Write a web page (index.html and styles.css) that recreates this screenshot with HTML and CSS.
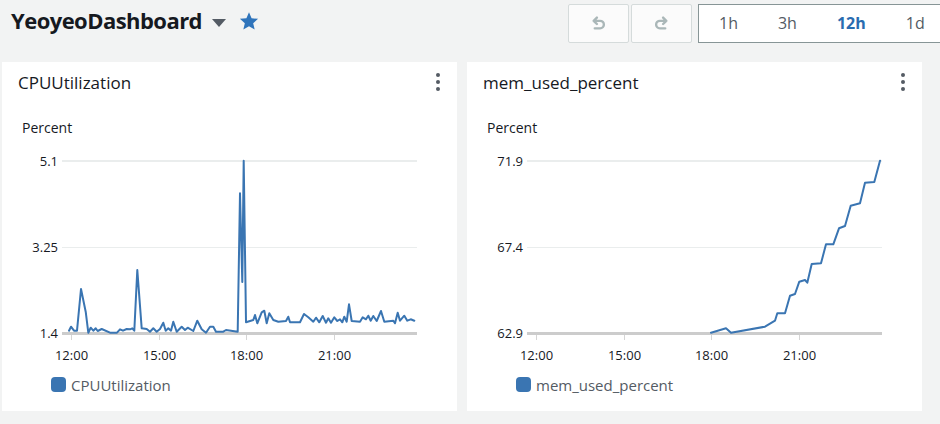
FILE: index.html
```html
<!DOCTYPE html>
<html lang="en">
<head>
<meta charset="utf-8">
<title>YeoyeoDashboard</title>
<link rel="stylesheet" href="styles.css">
</head>
<body>
<header class="topbar">
  <div class="title-area">
    <h1 class="dash-title">YeoyeoDashboard</h1>
    <span class="caret"></span>
    <svg class="star" viewBox="0 0 24 24" width="20" height="20"><path d="M12 1.5l3.1 7.2 7.8.7-5.9 5.2 1.8 7.6L12 18.2l-6.8 4 1.8-7.6-5.9-5.2 7.8-.7z"/></svg>
  </div>
  <div class="controls">
    <button class="icon-btn" aria-label="Undo"><svg viewBox="0 0 12 14" width="13" height="15"><path d="M4.5 1.5L1.5 4.5 4.5 7.5M1.5 4.5H7.5a3.5 3.5 0 0 1 0 7H2.5"/></svg></button>
    <button class="icon-btn" aria-label="Redo"><svg viewBox="0 0 12 14" width="13" height="15"><path d="M7.5 1.5L10.5 4.5 7.5 7.5M10.5 4.5H4.5a3.5 3.5 0 0 0 0 7H9.5"/></svg></button>
    <div class="range">
      <span class="range-item">1h</span>
      <span class="range-item">3h</span>
      <span class="range-item active">12h</span>
      <span class="range-item">1d</span>
    </div>
  </div>
</header>

<main class="grid">
  <section class="panel">
    <div class="panel-head">
      <h2 class="panel-title">CPUUtilization</h2>
      <span class="kebab"><i></i><i></i><i></i></span>
    </div>
    <div class="unit">Percent</div>
    <svg class="chart" viewBox="0 0 455 225" width="455" height="225">
      <line class="grid-top" x1="60" y1="16" x2="415" y2="16"/>
      <line class="grid-mid" x1="60" y1="102.5" x2="415" y2="102.5"/>
      <line class="tick" x1="69.5" y1="188" x2="69.5" y2="195"/>
      <line class="tick" x1="157.5" y1="188" x2="157.5" y2="195"/>
      <line class="tick" x1="244.5" y1="188" x2="244.5" y2="195"/>
      <line class="tick" x1="332.5" y1="188" x2="332.5" y2="195"/>
      <line class="grid-base" x1="60" y1="188.5" x2="415" y2="188.5"/>
      <text class="ylab" x="56" y="20.5">5.1</text>
      <text class="ylab" x="56" y="106.5">3.25</text>
      <text class="ylab" x="56" y="192.5">1.4</text>
      <text class="xlab" x="69.5" y="215">12:00</text>
      <text class="xlab" x="157.5" y="215">15:00</text>
      <text class="xlab" x="244.5" y="215">18:00</text>
      <text class="xlab" x="332.5" y="215">21:00</text>
      <polyline class="series" points="67,185.7 69,181.7 72,185.7 75,185.7 79,144 83.7,166.7 86.3,187.7 88.7,182.7 91.3,185.7 93.7,183.3 95.7,186 99.7,184 108,187.7 115,187.7 118,184.3 121,185.7 124.7,184 128,184.3 130.3,183.3 132.3,185.7 135.3,125 139.7,183.3 144.7,184 148,186.7 151.3,183.3 154.7,186.7 158,184 161.3,177.7 163.7,185.7 166.3,183.3 169,185.7 171.3,176.7 174.7,186.7 179.7,181.7 183,185 185.7,182.7 191.3,186 195.3,175.7 199.7,184.3 204,187.7 208,181.7 211.3,181.7 214,186.7 221.3,186.7 224,185 235.7,186.7 238,48.3 240.3,137 241.7,15.7 244,177.3 251.3,175 253,170 255.3,178.3 259.7,167.3 262.3,165.7 264.7,178.3 267.3,168.3 271.3,175 276.3,176.7 284,176 286.3,171.7 288,177.3 298,177.3 302,169 306.3,172.3 311.3,176.7 314,172.7 317.3,177.3 320.7,171 324,177.7 326.3,173.3 329,177.7 332.3,172.3 335.3,176 338,174.3 340.3,177.3 342.3,171.7 344.7,176.7 347,159.3 349.7,176 358,176.7 360.7,172.3 364,174.3 366.3,170.7 368.7,175.7 371.3,171 374.7,176 379,166 382.3,176.7 391.3,175.7 393,178.3 395.7,167.7 398,175.7 402.3,170.7 405.3,175.7 408.7,174.3 412.3,175.7"/>
    </svg>
    <div class="legend"><span class="swatch"></span><span>CPUUtilization</span></div>
  </section>

  <section class="panel">
    <div class="panel-head">
      <h2 class="panel-title">mem_used_percent</h2>
      <span class="kebab"><i></i><i></i><i></i></span>
    </div>
    <div class="unit">Percent</div>
    <svg class="chart" viewBox="0 0 455 225" width="455" height="225">
      <line class="grid-top" x1="60" y1="16" x2="415" y2="16"/>
      <line class="grid-mid" x1="60" y1="102.5" x2="415" y2="102.5"/>
      <line class="tick" x1="69.5" y1="188" x2="69.5" y2="195"/>
      <line class="tick" x1="157.5" y1="188" x2="157.5" y2="195"/>
      <line class="tick" x1="244.5" y1="188" x2="244.5" y2="195"/>
      <line class="tick" x1="332.5" y1="188" x2="332.5" y2="195"/>
      <line class="grid-base" x1="60" y1="188.5" x2="415" y2="188.5"/>
      <text class="ylab" x="56" y="20.5">71.9</text>
      <text class="ylab" x="56" y="106.5">67.4</text>
      <text class="ylab" x="56" y="192.5">62.9</text>
      <text class="xlab" x="69.5" y="215">12:00</text>
      <text class="xlab" x="157.5" y="215">15:00</text>
      <text class="xlab" x="244.5" y="215">18:00</text>
      <text class="xlab" x="332.5" y="215">21:00</text>
      <polyline class="series" points="244,187.7 259,183.3 264,187.7 298,181.7 308,175.7 310.3,168.3 318,168.3 323,150.7 328,149 332.3,136.7 338,135 340.3,137.7 344.7,119 354,118.3 359,99.3 366.3,99.3 372,83.3 378,81 383.7,60.7 393,58.3 398,37.7 407.3,37 413,15.7"/>
    </svg>
    <div class="legend"><span class="swatch"></span><span>mem_used_percent</span></div>
  </section>
</main>
</body>
</html>
```

FILE: styles.css
```css
html, body {
  margin: 0;
  padding: 0;
  overflow: hidden;
}

body {
  background: #f2f3f3;
  font-family: "Open Sans", "Noto Sans", sans-serif;
  color: #16191f;
  width: 940px;
  height: 424px;
}

.topbar {
  display: flex;
  align-items: flex-start;
  padding: 4px 0 0 11px;
  height: 39px;
}

.title-area {
  flex: 1;
  min-width: 0;
  display: flex;
  align-items: center;
  height: 30px;
  margin-top: 1px;
}

.dash-title {
  margin: 0;
  font-size: 22px;
  line-height: 30px;
  font-weight: 700;
  color: #16191f;
  letter-spacing: -0.55px;
}

.caret {
  width: 0;
  height: 0;
  margin: 5px 0 0 10px;
  border-left: 7px solid transparent;
  border-right: 7px solid transparent;
  border-top: 8px solid #545b64;
}

.star {
  margin: 2px 0 0 13px;
  fill: #2f74bb;
}

.controls {
  display: flex;
  flex-shrink: 0;
  margin-right: -40px;
}

.icon-btn {
  width: 61px;
  height: 39px;
  margin: 0 2px 0 0;
  padding: 0;
  border: 1px solid #d5dbdb;
  border-radius: 2px;
  background: #fbfbfb;
  display: flex;
  align-items: center;
  justify-content: center;
}

.icon-btn svg {
  fill: none;
  stroke: #aab7b8;
  stroke-width: 2.2;
  stroke-linecap: round;
  stroke-linejoin: round;
}

.icon-btn + .icon-btn {
  margin-right: 6px;
}

.range {
  display: flex;
  align-items: center;
  height: 37px;
  border: 1px solid #879596;
  background: #ffffff;
  width: 280px;
}

.range-item {
  padding: 0 20px;
  font-size: 16px;
  line-height: 37px;
  color: #545b64;
}

.range-item.active {
  font-weight: 700;
  color: #2a6cb0;
}

.grid {
  display: flex;
  gap: 10px;
  padding: 0 18px 0 2px;
  margin-top: 19px;
}

.panel {
  flex: 0 0 455px;
  height: 349px;
  background: #ffffff;
}

.panel-head {
  display: flex;
  justify-content: space-between;
  align-items: flex-start;
  padding: 9px 16px 0 16px;
  height: 24px;
}

.panel-title {
  margin: 0;
  font-size: 17px;
  line-height: 24px;
  font-weight: 400;
  color: #16191f;
}

.kebab {
  display: flex;
  flex-direction: column;
  gap: 3px;
  margin-top: 2px;
  margin-right: 1px;
}

.kebab i {
  display: block;
  width: 4px;
  height: 4px;
  border-radius: 50%;
  background: #545b64;
}

.unit {
  margin: 23px 0 0 20px;
  font-size: 14px;
  line-height: 20px;
  color: #16191f;
}

.chart {
  display: block;
  margin-top: 7px;
}

.chart text {
  font-family: "Open Sans", "Noto Sans", sans-serif;
  font-size: 13px;
  fill: #16191f;
}

.chart .ylab {
  text-anchor: end;
}

.chart .xlab {
  text-anchor: middle;
}

.grid-top {
  stroke: #eaeded;
  stroke-width: 2;
}

.grid-mid {
  stroke: #eaeded;
  stroke-width: 1;
}

.grid-base {
  stroke: #cccccc;
  stroke-width: 3;
}

.tick {
  stroke: #d5d5d5;
  stroke-width: 1;
}

.series {
  fill: none;
  stroke: #3a75b2;
  stroke-width: 2;
  stroke-linejoin: round;
  stroke-linecap: round;
}

.legend {
  display: flex;
  align-items: center;
  gap: 5px;
  margin: 7px 0 0 49px;
  height: 15px;
  font-size: 15px;
  color: #545b64;
}

.swatch {
  width: 15px;
  height: 15px;
  border-radius: 4px;
  background: #3a75b2;
}
```
